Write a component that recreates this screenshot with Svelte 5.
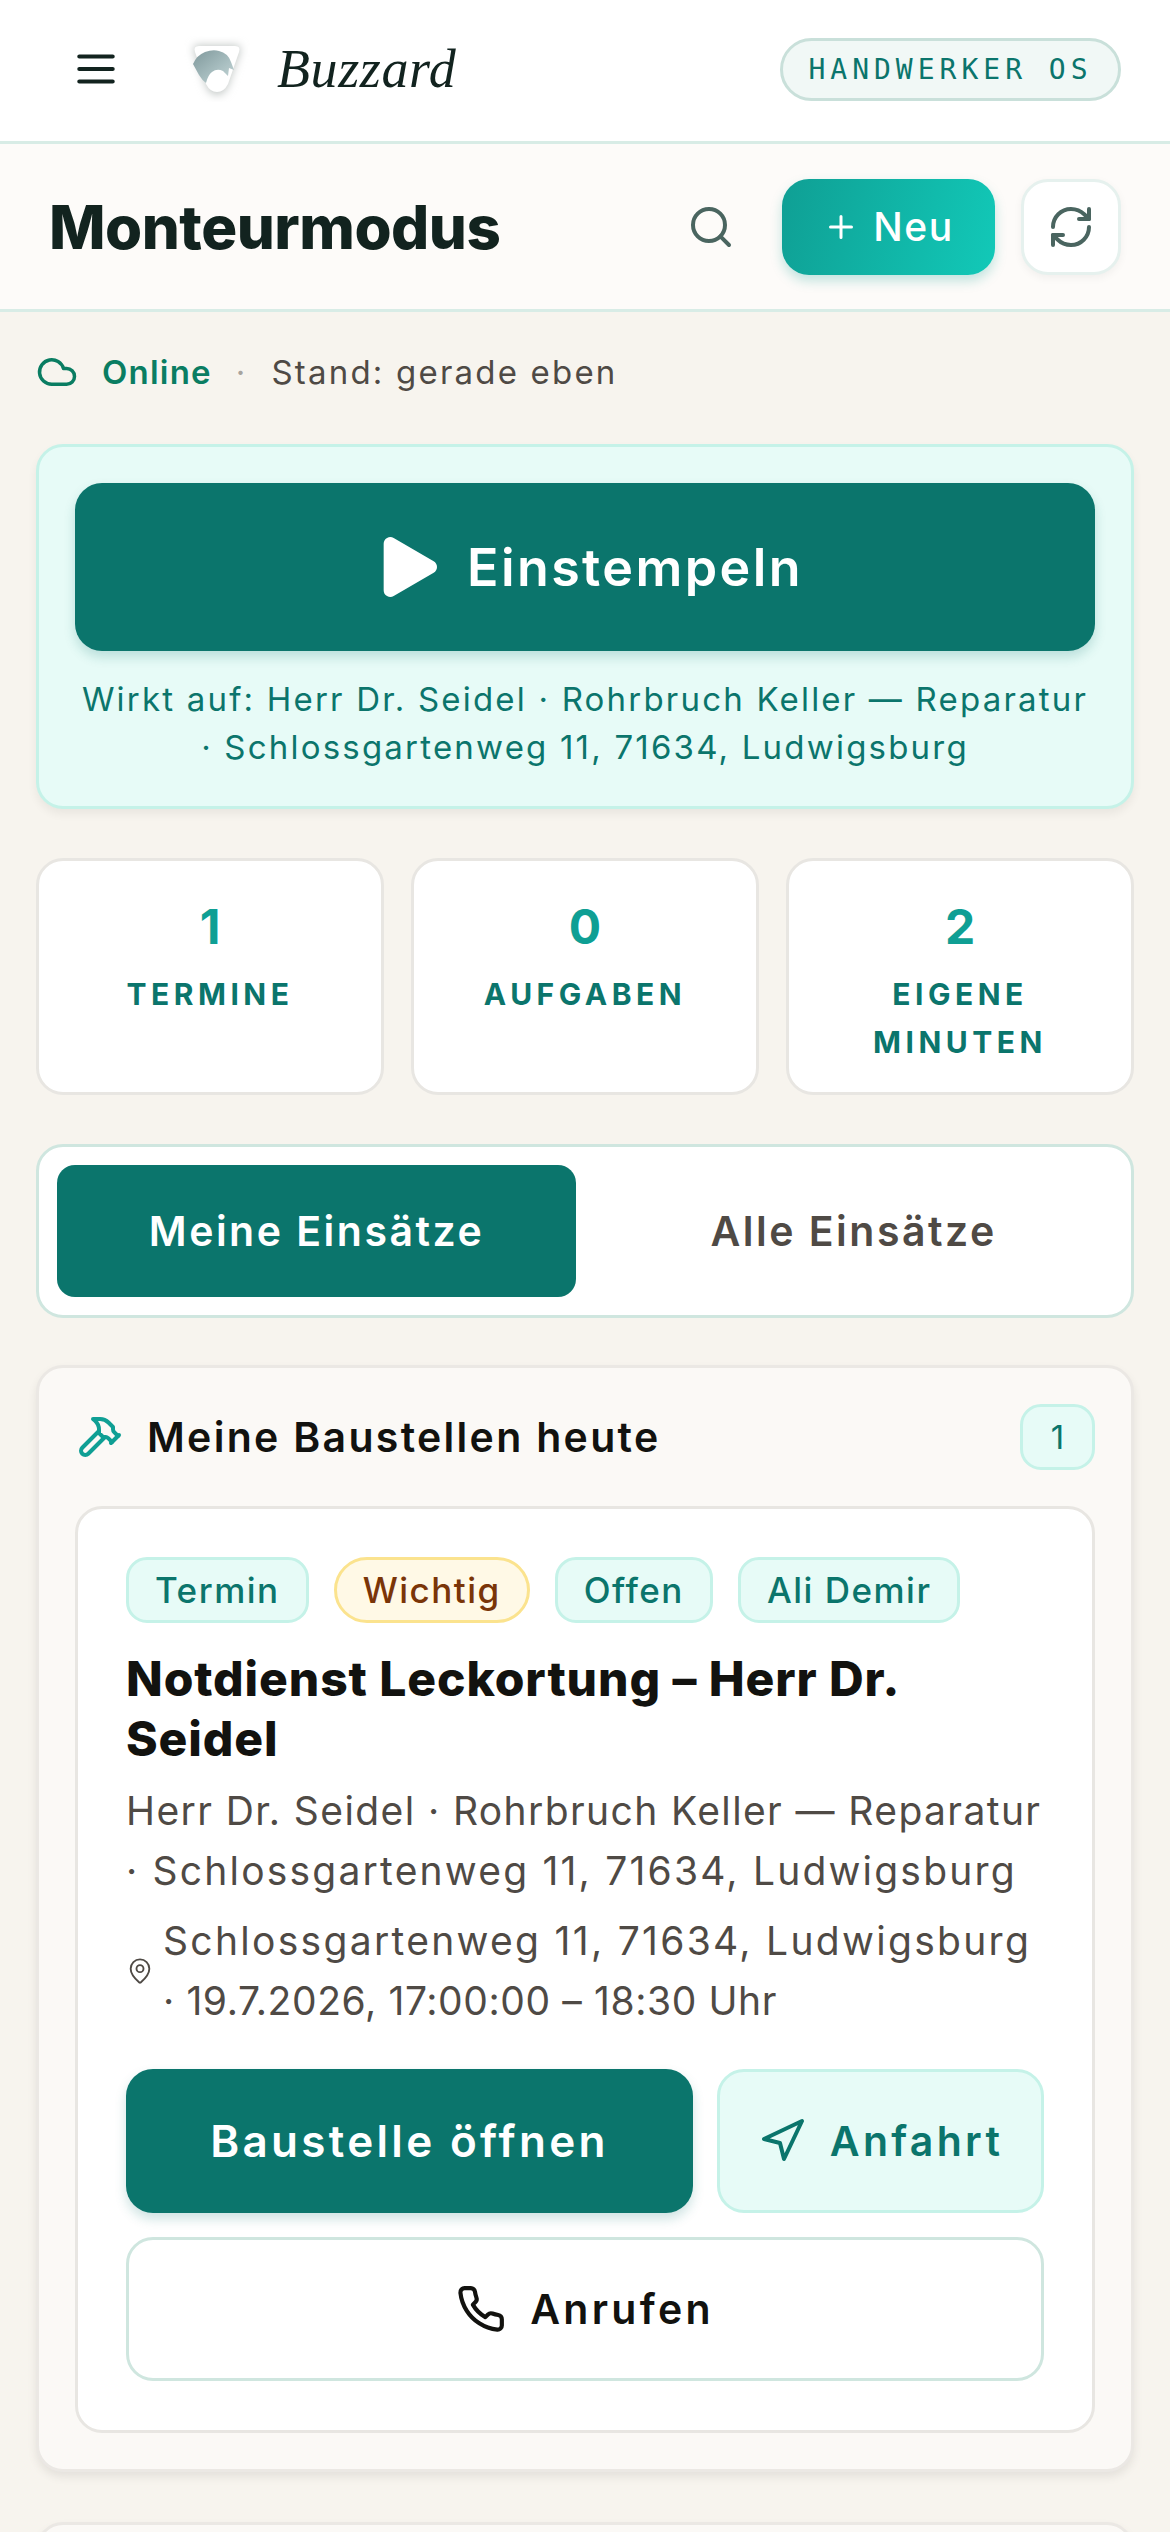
<script>
  const stats = [
    { value: '1', label: 'Termine' },
    { value: '0', label: 'Aufgaben' },
    { value: '2', label: 'Eigene Minuten' }
  ];
  const chips = [
    { text: 'Termin', warn: false },
    { text: 'Wichtig', warn: true },
    { text: 'Offen', warn: false },
    { text: 'Ali Demir', warn: false }
  ];
</script>

<div class="page">
  <header class="topbar">
    <div class="brand">
      <svg class="menu" viewBox="0 0 24 24" width="50" height="50" fill="none" stroke="#12231f" stroke-width="2" stroke-linecap="round">
        <path d="M4 6h16M4 12h16M4 18h16" />
      </svg>
      <svg class="logo" viewBox="0 0 70 66" width="70" height="66">
        <defs>
          <linearGradient id="bird" x1="0" y1="0" x2="1" y2="1">
            <stop offset="0" stop-color="#7f989b" />
            <stop offset="0.6" stop-color="#a9bfc1" />
            <stop offset="1" stop-color="#c6d6d7" />
          </linearGradient>
          <filter id="soft" x="-30%" y="-30%" width="160%" height="160%"><feGaussianBlur stdDeviation="4" /></filter>
        </defs>
        <path d="M16 9h38q6 0 4 7L46 50q-4 9-11 9t-11-9L12 16q-2-7 4-7z" fill="#c4c9c7" filter="url(#soft)" />
        <path d="M17 10h36q6 0 4 6L46 48q-4 8-11 8t-11-8L13 16q-2-6 4-6z" fill="#fff" />
        <path d="M11 28q4-9 12-12 8-3 14-1 9 2 12 11l3 8-5-2-1 8-5-5q-6-3-11 1-4 3-6 11-4-3-7-8z" fill="url(#bird)" />
      </svg>
      <span class="wordmark">Buzzard</span>
    </div>
    <span class="os-badge">HANDWERKER OS</span>
  </header>

  <section class="titlebar">
    <h1>Monteurmodus</h1>
    <div class="title-actions">
      <svg class="search" viewBox="0 0 24 24" width="48" height="48" fill="none" stroke="#4a6560" stroke-width="2" stroke-linecap="round" stroke-linejoin="round">
        <circle cx="11" cy="11" r="8" /><path d="m21 21-4.3-4.3" />
      </svg>
      <button class="new">
        <svg viewBox="0 0 24 24" width="36" height="36" fill="none" stroke="#fff" stroke-width="2" stroke-linecap="round"><path d="M5 12h14M12 5v14" /></svg>
        Neu
      </button>
      <button class="refresh" aria-label="Aktualisieren">
        <svg viewBox="0 0 24 24" width="48" height="48" fill="none" stroke="#4a6560" stroke-width="2" stroke-linecap="round" stroke-linejoin="round">
          <path d="M3 12a9 9 0 0 1 9-9 9.75 9.75 0 0 1 6.74 2.74L21 8" /><path d="M21 3v5h-5" />
          <path d="M21 12a9 9 0 0 1-9 9 9.75 9.75 0 0 1-6.74-2.74L3 16" /><path d="M8 16H3v5" />
        </svg>
      </button>
    </div>
  </section>

  <main>
    <div class="status">
      <svg viewBox="0 0 24 24" width="42" height="42" fill="none" stroke="#0a7d62" stroke-width="2" stroke-linecap="round" stroke-linejoin="round">
        <path d="M17.5 19H9a7 7 0 1 1 6.71-9h1.79a4.5 4.5 0 1 1 0 9Z" />
      </svg>
      <strong>Online</strong>
      <span class="sep">·</span>
      <span>Stand: gerade eben</span>
    </div>

    <section class="clock">
      <button class="clock-btn">
        <svg viewBox="0 0 24 24" width="80" height="80" fill="#fff">
          <path d="M5 5a2 2 0 0 1 3.008-1.728l11.997 6.998a2 2 0 0 1 .003 3.458l-12 7A2 2 0 0 1 5 19z" />
        </svg>
        Einstempeln
      </button>
      <p>Wirkt auf: Herr Dr. Seidel · Rohrbruch Keller — Reparatur · Schlossgartenweg 11, 71634, Ludwigsburg</p>
    </section>

    <section class="stats">
      {#each stats as s}
        <div class="stat">
          <b>{s.value}</b>
          <span>{s.label}</span>
        </div>
      {/each}
    </section>

    <nav class="segment">
      <button class="active">Meine Einsätze</button>
      <button>Alle Einsätze</button>
    </nav>

    <section class="panel">
      <div class="panel-head">
        <svg viewBox="0 0 24 24" width="48" height="48" fill="none" stroke="#0f9f94" stroke-width="2" stroke-linecap="round" stroke-linejoin="round">
          <path d="m15 12-8.373 8.373a1 1 0 1 1-3-3L12 9" /><path d="m18 15 4-4" />
          <path d="m21.5 11.5-1.914-1.914A2 2 0 0 1 19 8.172V7l-2.26-2.26a6 6 0 0 0-4.202-1.756L9 2.96l.92.82A6.18 6.18 0 0 1 12 8.4V10l2 2h1.172a2 2 0 0 1 1.414.586L18.5 14.5" />
        </svg>
        <h2>Meine Baustellen heute</h2>
        <span class="count">1</span>
      </div>

      <article class="job">
        <div class="chips">
          {#each chips as c}
            <span class="chip" class:warn={c.warn}>{c.text}</span>
          {/each}
        </div>
        <h3>Notdienst Leckortung – Herr Dr. Seidel</h3>
        <p class="sub">Herr Dr. Seidel · Rohrbruch Keller — Reparatur <span class="wide">· Schlossgartenweg 11, 71634, Ludwigsburg</span></p>
        <div class="where">
          <svg viewBox="0 0 24 24" width="28" height="28" fill="none" stroke="#4f4a45" stroke-width="1.6" stroke-linecap="round" stroke-linejoin="round">
            <path d="M20 10c0 4.993-5.539 10.193-7.399 11.799a1 1 0 0 1-1.202 0C9.539 20.193 4 14.993 4 10a8 8 0 0 1 16 0" /><circle cx="12" cy="10" r="3" />
          </svg>
          <p>Schlossgartenweg 11, 71634, Ludwigsburg <span class="tight">· 19.7.2026, 17:00:00 – 18:30 Uhr</span></p>
        </div>
        <div class="actions">
          <button class="open">Baustelle öffnen</button>
          <button class="route">
            <svg viewBox="0 0 24 24" width="48" height="48" fill="none" stroke="#0b756c" stroke-width="2" stroke-linecap="round" stroke-linejoin="round">
              <polygon points="3 11 22 2 13 21 11 13 3 11" />
            </svg>
            Anfahrt
          </button>
        </div>
        <button class="call">
          <svg viewBox="0 0 24 24" width="50" height="50" fill="none" stroke="#12120f" stroke-width="2" stroke-linecap="round" stroke-linejoin="round">
            <path d="M22 16.92v3a2 2 0 0 1-2.18 2 19.79 19.79 0 0 1-8.63-3.07 19.5 19.5 0 0 1-6-6 19.79 19.79 0 0 1-3.07-8.67A2 2 0 0 1 4.11 2h3a2 2 0 0 1 2 1.72 12.84 12.84 0 0 0 .7 2.81 2 2 0 0 1-.45 2.11L8.09 9.91a16 16 0 0 0 6 6l1.27-1.27a2 2 0 0 1 2.11-.45 12.84 12.84 0 0 0 2.81.7A2 2 0 0 1 22 16.92z" />
          </svg>
          Anrufen
        </button>
      </article>
    </section>

    <section class="panel next"></section>
  </main>
</div>

<style>
  :global(body) {
    margin: 0;
    background: #f7f4ee;
  }

  .page {
    width: 1170px;
    height: 2532px;
    overflow: hidden;
    background: #f7f4ee;
    font-family: Inter, "Liberation Sans", sans-serif;
    color: #12120f;
  }

  button {
    font-family: inherit;
    cursor: pointer;
    display: flex;
    align-items: center;
    justify-content: center;
    box-sizing: border-box;
  }

  svg {
    flex-shrink: 0;
  }

  .topbar {
    box-sizing: border-box;
    height: 144px;
    padding: 0 49px 3px 71px;
    display: flex;
    align-items: center;
    justify-content: space-between;
    background: #fff;
    border-bottom: 3px solid #d8ece6;
  }

  .brand {
    display: flex;
    align-items: center;
  }

  .logo {
    margin-left: 61px;
  }

  .wordmark {
    margin-left: 25px;
    font-family: "Liberation Serif", serif;
    font-style: italic;
    font-size: 54px;
    letter-spacing: 0.6px;
    color: #12231f;
  }

  .os-badge {
    box-sizing: border-box;
    width: 341px;
    height: 63px;
    display: flex;
    align-items: center;
    justify-content: center;
    border: 3px solid #c9e0da;
    border-radius: 32px;
    background: #f1f8f6;
    font-family: "DejaVu Sans Mono", monospace;
    font-size: 28px;
    letter-spacing: 5px;
    color: #0b756c;
  }

  .titlebar {
    box-sizing: border-box;
    height: 168px;
    padding: 0 49px;
    display: flex;
    align-items: center;
    justify-content: space-between;
    background: #fdfbf9;
    border-bottom: 3px solid #d8ece6;
  }

  h1 {
    margin: 0;
    font-size: 60px;
    font-weight: 800;
    letter-spacing: -0.5px;
    color: #12231f;
  }

  .title-actions {
    display: flex;
    align-items: center;
    gap: 26px;
  }

  .search {
    margin-right: 21px;
  }

  .new {
    width: 213px;
    height: 96px;
    gap: 14px;
    border: 0;
    border-radius: 27px;
    background: linear-gradient(105deg, #0f9f94, #12c9b8);
    box-shadow: 0 6px 12px rgba(15, 159, 148, 0.25);
    color: #fff;
    font-size: 39px;
    font-weight: 500;
    letter-spacing: 1.5px;
  }

  .refresh {
    width: 100px;
    height: 96px;
    border: 3px solid #e6f1ee;
    border-radius: 27px;
    background: #fff;
    box-shadow: 0 3px 9px rgba(0, 0, 0, 0.05);
  }

  main {
    padding: 0 36px;
    display: flex;
    flex-direction: column;
  }

  .status {
    box-sizing: border-box;
    height: 132px;
    padding-bottom: 12px;
    display: flex;
    align-items: center;
    gap: 24px;
    font-size: 33px;
    letter-spacing: 2.2px;
    color: #4f4a45;
  }

  .status strong {
    color: #0a7d62;
    font-weight: 600;
    letter-spacing: 1.2px;
  }

  .status .sep {
    color: #a8a49e;
  }

  .clock {
    box-sizing: border-box;
    height: 365px;
    padding: 36px 36px 0;
    background: #e7fbf7;
    border: 3px solid #c5f2e8;
    border-radius: 27px;
    box-shadow: 0 5px 10px rgba(0, 0, 0, 0.06);
  }

  .clock-btn {
    width: 100%;
    height: 168px;
    gap: 20px;
    border: 0;
    border-radius: 27px;
    background: #0b756c;
    box-shadow: 0 6px 12px rgba(11, 117, 108, 0.2);
    color: #fff;
    font-size: 52px;
    font-weight: 600;
    letter-spacing: 2.4px;
  }

  .clock p {
    margin: 24px 0 0;
    font-size: 33px;
    line-height: 48px;
    letter-spacing: 2.2px;
    text-align: center;
    color: #0b756c;
  }

  .stats {
    margin-top: 49px;
    display: grid;
    grid-template-columns: repeat(3, 1fr);
    gap: 27px;
  }

  .stat {
    box-sizing: border-box;
    height: 237px;
    padding: 36px 24px 0;
    display: flex;
    flex-direction: column;
    align-items: center;
    text-align: center;
    background: #fff;
    border: 3px solid #e8e6e2;
    border-radius: 27px;
  }

  .stat b {
    font-size: 48px;
    line-height: 60px;
    font-weight: 700;
    color: #0f9f94;
  }

  .stat span {
    margin-top: 13px;
    font-size: 30px;
    line-height: 48px;
    font-weight: 700;
    letter-spacing: 4.5px;
    text-transform: uppercase;
    color: #0b756c;
  }

  .segment {
    box-sizing: border-box;
    margin-top: 49px;
    height: 174px;
    padding: 18px;
    display: grid;
    grid-template-columns: 1fr 1fr;
    gap: 18px;
    background: #fff;
    border: 3px solid #cfe6df;
    border-radius: 27px;
  }

  .segment button {
    border: 0;
    border-radius: 18px;
    background: transparent;
    font-size: 41px;
    font-weight: 600;
    letter-spacing: 2.5px;
    color: #4f4a45;
  }

  .segment .active {
    background: #0b756c;
    color: #fff;
  }

  .panel {
    box-sizing: border-box;
    margin-top: 47px;
    height: 1107px;
    padding: 36px 36px 0;
    background: #fbf9f6;
    border: 3px solid #ebe8e4;
    border-radius: 27px;
    box-shadow: 0 5px 10px rgba(0, 0, 0, 0.08);
    flex-shrink: 0;
  }

  .panel.next {
    margin-top: 50px;
    height: 300px;
  }

  .panel-head {
    height: 66px;
    display: flex;
    align-items: center;
    gap: 24px;
  }

  h2 {
    flex: 1;
    margin: 0;
    font-size: 41px;
    font-weight: 600;
    letter-spacing: 2.3px;
  }

  .count {
    box-sizing: border-box;
    width: 75px;
    height: 66px;
    display: flex;
    align-items: center;
    justify-content: center;
    background: #e7fbf7;
    border: 3px solid #c5f2e8;
    border-radius: 21px;
    font-size: 33px;
    color: #0b756c;
  }

  .job {
    box-sizing: border-box;
    margin-top: 36px;
    height: 927px;
    padding: 48px;
    background: #fff;
    border: 3px solid #e8e6e2;
    border-radius: 27px;
  }

  .chips {
    display: flex;
    gap: 25px;
  }

  .chip {
    box-sizing: border-box;
    height: 66px;
    padding: 0 26px;
    display: flex;
    align-items: center;
    background: #e7fbf7;
    border: 3px solid #c5f2e8;
    border-radius: 21px;
    font-size: 35px;
    font-weight: 500;
    letter-spacing: 1.5px;
    color: #0b756c;
  }

  .chip.warn {
    background: #fff9e6;
    border-color: #fbe38e;
    border-radius: 33px;
    color: #7a3508;
  }

  h3 {
    margin: 26px 0 0;
    font-size: 48px;
    line-height: 60px;
    font-weight: 800;
    letter-spacing: 0.9px;
  }

  .sub,
  .where p {
    margin: 0;
    font-size: 39px;
    line-height: 60px;
    letter-spacing: 1.4px;
    color: #4f4a45;
  }

  .where p {
    letter-spacing: 2.3px;
  }

  .wide {
    letter-spacing: 2.2px;
  }

  .tight {
    letter-spacing: 0.6px;
  }

  .sub {
    margin-top: 12px;
  }

  .where {
    margin-top: 10px;
    display: flex;
    align-items: center;
    gap: 9px;
  }

  .actions {
    margin-top: 38px;
    display: flex;
    gap: 24px;
  }

  .open,
  .route,
  .call {
    height: 144px;
    border-radius: 27px;
    font-size: 41px;
    font-weight: 600;
    letter-spacing: 3.3px;
  }

  .open {
    flex: 1;
    border: 0;
    background: #0b756c;
    box-shadow: 0 6px 12px rgba(11, 117, 108, 0.2);
    color: #fff;
    font-size: 44px;
  }

  .route {
    width: 327px;
    gap: 24px;
    background: #e7fbf7;
    border: 3px solid #c5f2e8;
    color: #0b756c;
  }

  .call {
    margin-top: 24px;
    width: 100%;
    gap: 24px;
    background: #fff;
    border: 3px solid #cfe6df;
    color: #12120f;
  }
</style>
